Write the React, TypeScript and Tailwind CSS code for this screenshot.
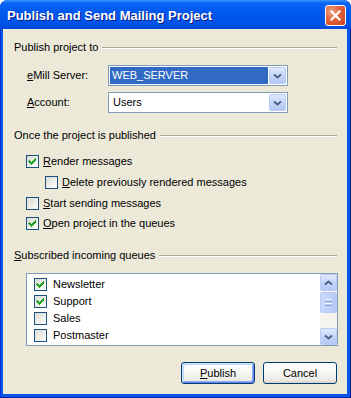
import React from 'react';

const queues = [
  { label: 'Newsletter', checked: true },
  { label: 'Support', checked: true },
  { label: 'Sales', checked: false },
  { label: 'Postmaster', checked: false },
];

function Check({ checked }: { checked?: boolean }) {
  return (
    <span className="flex h-[13px] w-[13px] shrink-0 items-center justify-center border border-[#1c5180] bg-[linear-gradient(135deg,#dcdcd7_0%,#eeeee9_55%,#ffffff_100%)]">
      {checked && (
        <svg width="11" height="11" viewBox="0 0 11 11" shapeRendering="crispEdges">
          <path d="M2 4h1v1h1v1h1v-1h1v-1h1v-1h1v-1h1v3h-1v1h-1v1h-1v1h-1v1h-1v-1h-1v-1h-1v-1h-1z" fill="#21a121" />
        </svg>
      )}
    </span>
  );
}

function Chevron({ up }: { up?: boolean }) {
  return (
    <svg width="9" height="6" viewBox="0 0 9 6" className={up ? 'rotate-180' : ''}>
      <path d="M1 1.5 L4.5 4.5 L8 1.5" fill="none" stroke="#4d6185" strokeWidth="2" />
    </svg>
  );
}

function ArrowBtn({ up, className = '' }: { up?: boolean; className?: string }) {
  return (
    <div
      className={`flex h-[17px] w-[17px] items-center justify-center rounded-[2px] border border-[#bccdf5] bg-[linear-gradient(180deg,#e1eafe_0%,#c7d7fb_45%,#b4c8f6_100%)] ${className}`}
    >
      <Chevron up={up} />
    </div>
  );
}

function Combo({ value, selected }: { value: string; selected?: boolean }) {
  return (
    <div className="flex h-[21px] w-[180px] items-center gap-[1px] border border-[#7f9db9] bg-white p-[1px]">
      <div className={`flex h-full flex-1 items-center pl-[2px] ${selected ? 'bg-[#316ac5] text-white' : 'pl-[3px]'}`}>
        {value}
      </div>
      <ArrowBtn />
    </div>
  );
}

function GroupTitle({ children, className = '' }: { children: React.ReactNode; className?: string }) {
  return (
    <div className={`flex items-center pl-[11px] pr-[10px] ${className}`}>
      <span className="leading-[13px]">{children}</span>
      <div className="ml-[4px] h-[2px] flex-1 border-t border-b border-t-[#aca899] border-b-white" />
    </div>
  );
}

function CheckRow({ checked, children, className = '' }: { checked?: boolean; children: React.ReactNode; className?: string }) {
  return (
    <div className={`flex h-[13px] items-center ${className}`}>
      <Check checked={checked} />
      <span className="ml-[4px] leading-[13px]">{children}</span>
    </div>
  );
}

function Button({ children, primary }: { children: React.ReactNode; primary?: boolean }) {
  return (
    <div
      className={`flex h-[22px] w-[74px] items-center justify-center rounded-[3px] border border-[#003c74] bg-[linear-gradient(180deg,#ffffff_0%,#f7f7f4_40%,#ecebe6_85%,#d6d0c5_100%)] ${
        primary ? 'shadow-[inset_1px_1px_0_#cee7ff,inset_-1px_-1px_0_#6982ee,inset_2px_2px_0_#bcd4f6,inset_-2px_-2px_0_#89adef]' : ''
      }`}
    >
      {children}
    </div>
  );
}

export default function App() {
  return (
    <div className="flex h-[398px] w-[351px] flex-col overflow-hidden rounded-t-[8px] bg-[#0b55e9] font-['Liberation_Sans',Arial,sans-serif] text-[11px] text-black shadow-[inset_1px_0_0_#0831d9,inset_-1px_0_0_#001ea0,inset_0_-1px_0_#001ea0]">
      {/* title bar */}
      <div className="flex h-[29px] shrink-0 items-center justify-between pl-[7px] pr-[5px] pt-[2px] bg-[linear-gradient(180deg,#3d95ff_0%,#0a66f5_10%,#0058ee_40%,#0055ea_75%,#0048dc_100%)]">
        <span className="text-[13px] font-bold leading-[15px] text-white [text-shadow:1px_1px_0_#0a1883]">
          Publish and Send Mailing Project
        </span>
        <div className="flex h-[21px] w-[21px] items-center justify-center rounded-[3px] border border-white bg-[radial-gradient(circle_at_30%_30%,#f0a589_0%,#e2613c_45%,#c8421b_100%)]">
          <svg width="11" height="11" viewBox="0 0 11 11">
            <path d="M1.5 1.5 L9.5 9.5 M9.5 1.5 L1.5 9.5" stroke="white" strokeWidth="2.2" strokeLinecap="square" />
          </svg>
        </div>
      </div>

      {/* client area */}
      <div className="mb-[4px] ml-[3px] mr-[4px] flex flex-1 flex-col bg-[#ece9d8] pt-[12px]">
        <GroupTitle>Publish project to</GroupTitle>

        <div className="mt-[11px] flex items-center pl-[24px]">
          <span className="w-[81px] leading-[13px]">
            <u>e</u>Mill Server:
          </span>
          <Combo value="WEB_SERVER" selected />
        </div>
        <div className="mt-[6px] flex items-center pl-[24px]">
          <span className="w-[81px] leading-[13px]">
            <u>A</u>ccount:
          </span>
          <Combo value="Users" />
        </div>

        <GroupTitle className="mt-[16px]">Once the project is published</GroupTitle>

        <CheckRow checked className="mt-[13px] pl-[23px]">
          <u>R</u>ender messages
        </CheckRow>
        <CheckRow className="mt-[8px] pl-[42px]">
          <u>D</u>elete previously rendered messages
        </CheckRow>
        <CheckRow className="mt-[8px] pl-[23px]">
          <u>S</u>tart sending messages
        </CheckRow>
        <CheckRow checked className="mt-[7px] pl-[23px]">
          <u>O</u>pen project in the queues
        </CheckRow>

        <GroupTitle className="mt-[19px]">
          <u>S</u>ubscribed incoming queues
        </GroupTitle>

        <div className="ml-[23px] mt-[11px] flex h-[73px] w-[312px] border border-[#7f9db9] bg-white">
          <div className="flex-1 pt-[2px]">
            {queues.map((q) => (
              <div key={q.label} className="flex h-[17px] items-center pl-[7px]">
                <Check checked={q.checked} />
                <span className="ml-[6px] leading-[13px]">{q.label}</span>
              </div>
            ))}
          </div>
          <div className="flex w-[17px] flex-col bg-[#f4f3ee]">
            <ArrowBtn up />
            <div className="mt-[1px] flex h-[21px] w-[17px] items-center justify-center rounded-[2px] border border-[#bccdf5] bg-[linear-gradient(90deg,#c9d8fc_0%,#bfd1fa_50%,#b4c8f6_100%)]">
              <div className="flex flex-col gap-[1px]">
                <div className="h-px w-[7px] bg-[#eef3fe]" />
                <div className="h-px w-[7px] bg-[#8aa6e6]" />
                <div className="h-px w-[7px] bg-[#eef3fe]" />
                <div className="h-px w-[7px] bg-[#8aa6e6]" />
              </div>
            </div>
            <div className="flex-1" />
            <ArrowBtn />
          </div>
        </div>

        <div className="mt-[16px] flex justify-end gap-[8px] pr-[10px]">
          <Button primary>
            <u>P</u>ublish
          </Button>
          <Button>Cancel</Button>
        </div>
      </div>
    </div>
  );
}
